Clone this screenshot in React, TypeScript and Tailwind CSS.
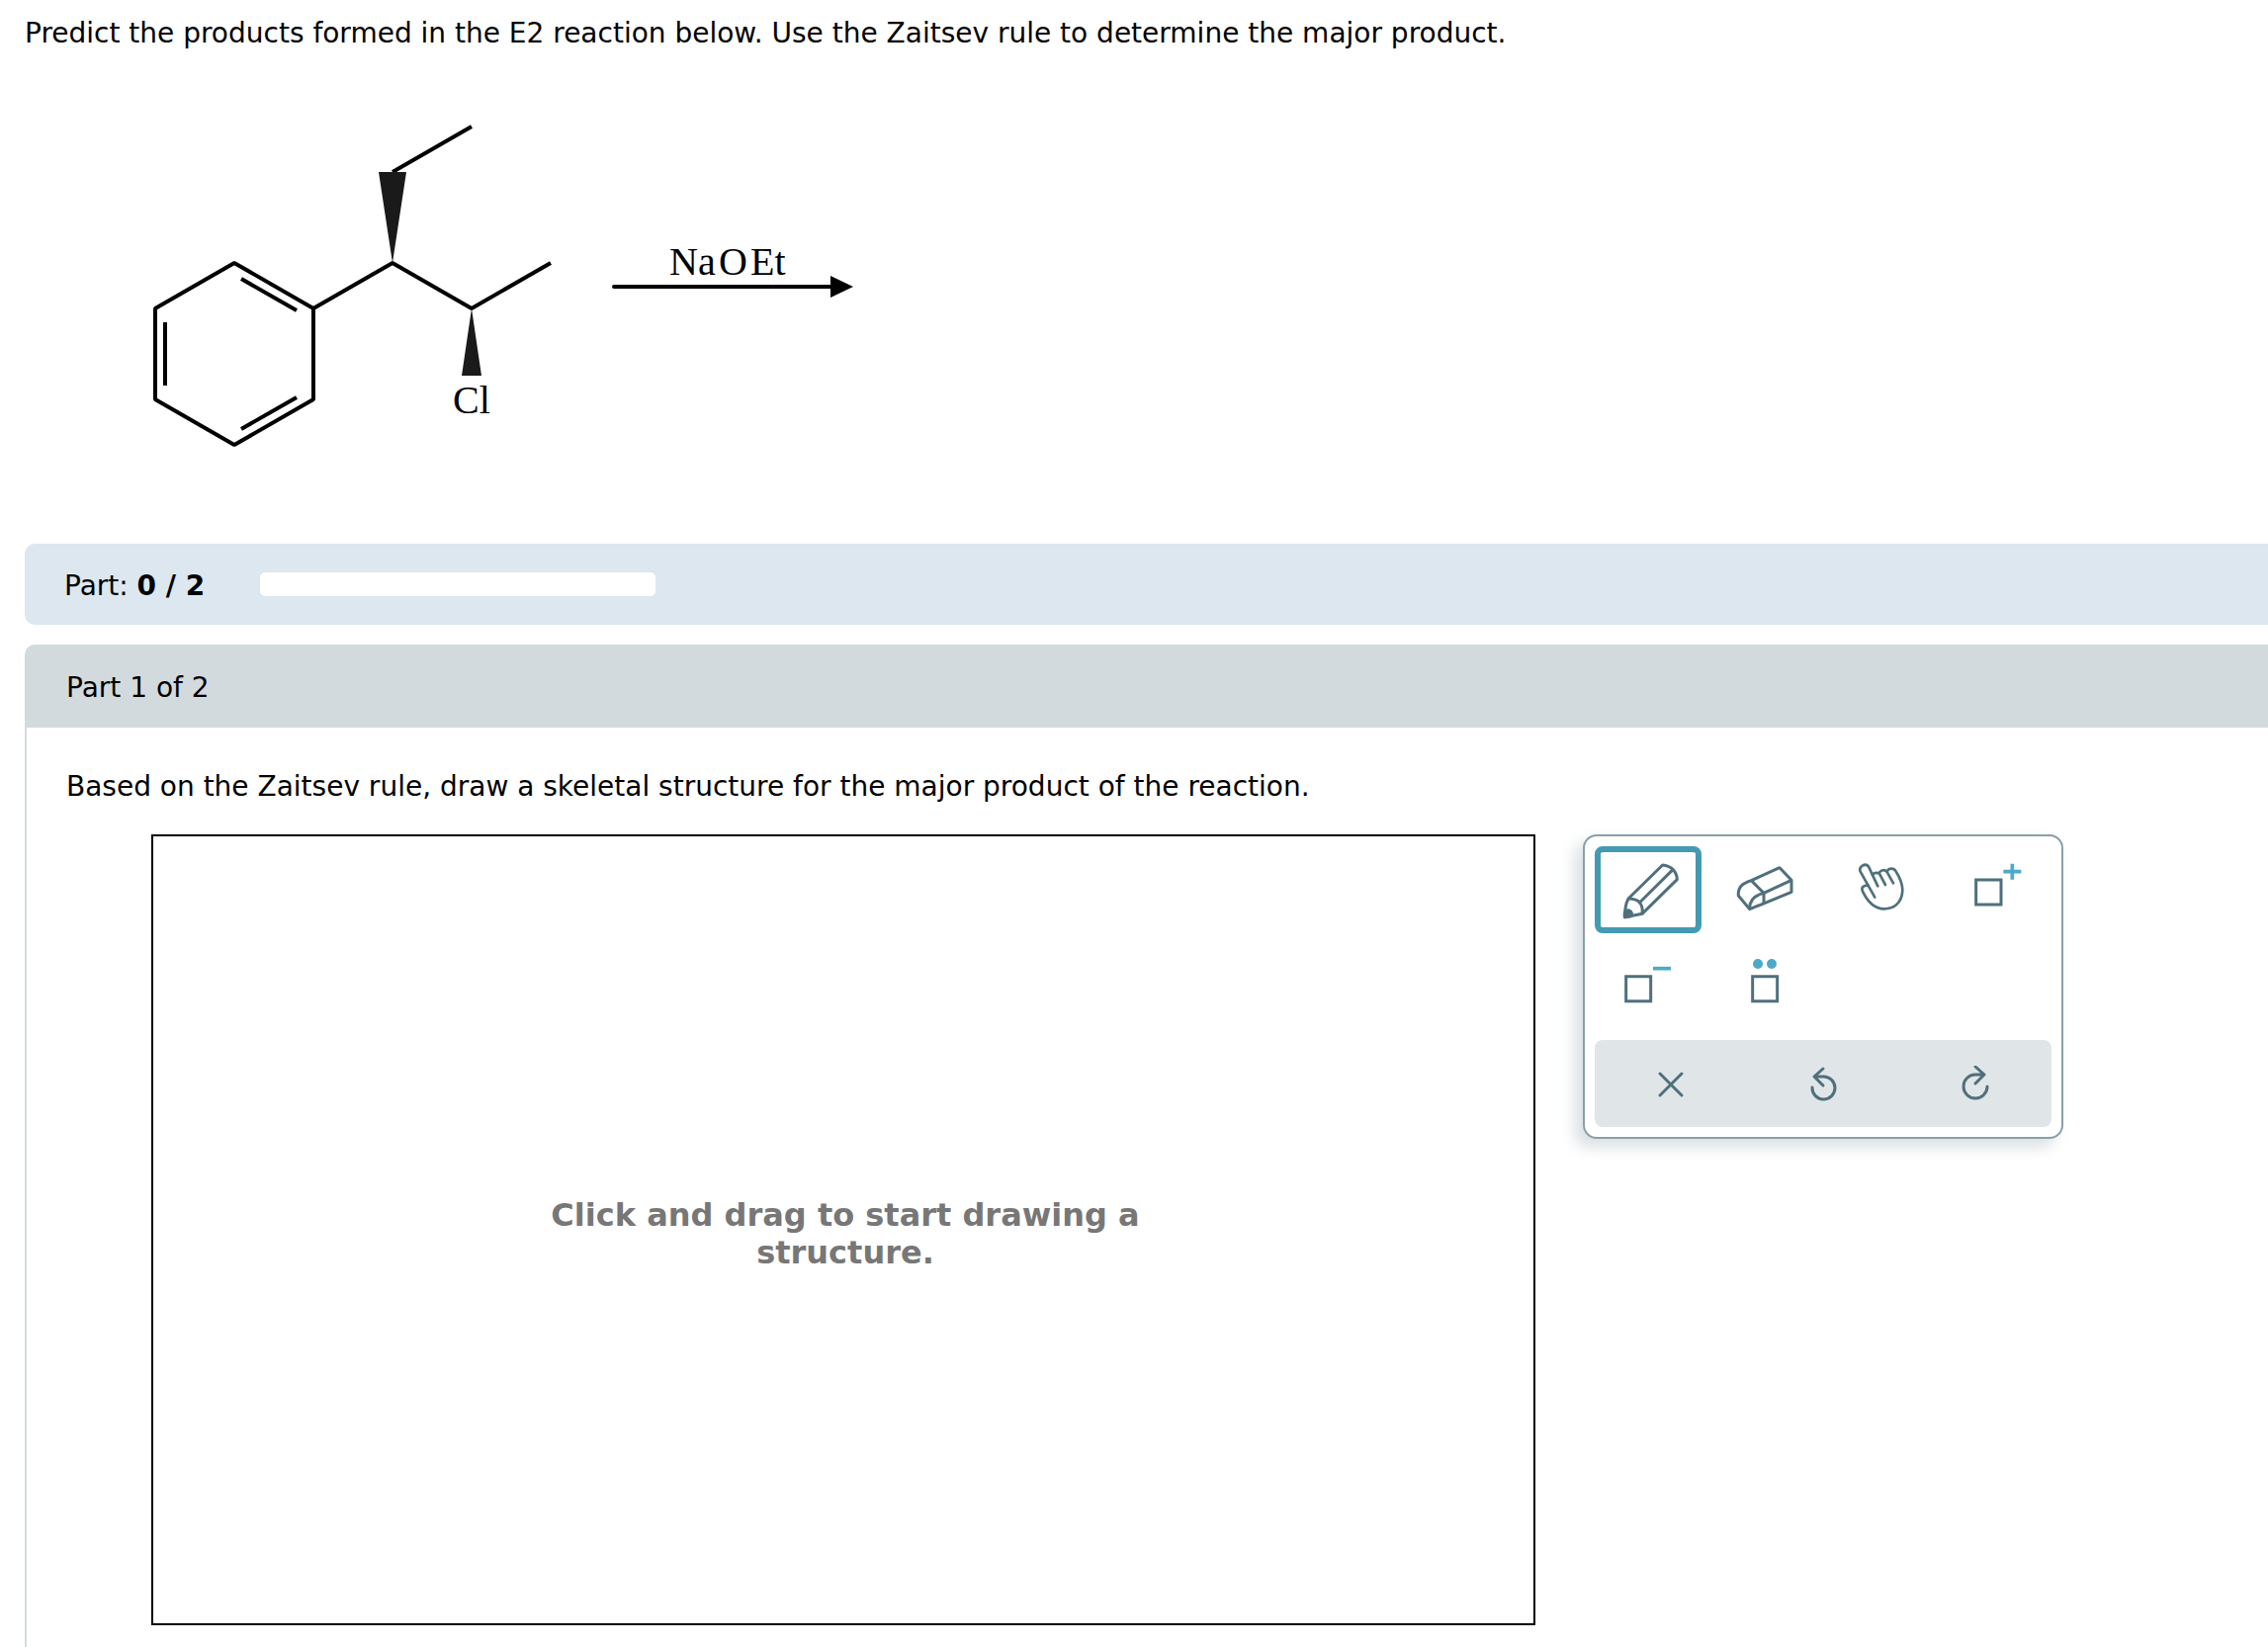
import type { ReactNode } from "react";

const Molecule = () => {
  return (
    <svg
      viewBox="0 0 720 340"
      className="ml-[151px] h-[340px] w-[720px]"
      role="img"
      aria-label="Reaction scheme"
    >
      <g transform="translate(-151 -118)">
        <g fill="none" stroke="#000" strokeWidth="4" strokeLinecap="butt">
          {/* benzene ring */}
          <path d="M237 266 317 312V404L237 450 157 404V312Z" strokeLinejoin="bevel" />
          <path d="M244 282 300 314M167 326V390M300 402 244 434" />
          {/* chain */}
          <path d="M317 312 397 266 477 312 557 266M397 174 477 128" strokeLinejoin="bevel" />
          <path d="M621 290H842" strokeLinecap="round" />
        </g>
        <path d="M383 174H411L397 266ZM477 312 487 380H467Z" fill="#1a1a1a" />
        <path d="M840 279 863 290 840 301Z" />
        <g fontFamily="Liberation Serif, Times New Roman, serif" fontSize="40">
          <text x="458" y="418">Cl</text>
          <text x="677" y="278">Na</text>
          <text x="727" y="278">O</text>
          <text x="759" y="278">Et</text>
        </g>
      </g>
    </svg>
  );
};

const PencilIcon = () => (
  <svg viewBox="0 0 288 228" className="h-full w-full" fill="none" stroke="#4f707c" strokeWidth="9" strokeLinejoin="round">
    <path d="M84 141 188 39C211 41 231 56 232 83L126 187 74 197C72 182 76 156 84 141Z" />
    <path d="M84 141C105 142 114 146 118 153C128 163 128 173 126 187M118 153 217 55" />
    <path d="M73 197C70 180 78 174 87 177C96 181 96 190 92 194Z" fill="#4f707c" />
  </svg>
);

const EraserIcon = () => (
  <svg viewBox="0 0 288 228" className="h-full w-full" fill="none" stroke="#4f707c" strokeWidth="9" strokeLinejoin="round">
    <path d="M103 86 189 47 225 85V121L98 173 64 132C62 103 78 95 103 86Z" />
    <path d="M103 86 141 124V155M225 85 141 124C114 131 97 146 98 173" />
  </svg>
);

const HandIcon = () => (
  <svg viewBox="0 0 288 228" className="h-full w-full" fill="none" stroke="#4f707c" strokeWidth="8" strokeLinecap="round" strokeLinejoin="round">
    <path d="M124 137 80 59C74 44 95 31 105 44L133 103" />
    <path d="M117 69C121 62 133 60 139 67L156 99" />
    <path d="M137 63C143 52 156 52 162 62L180 94" />
    <path d="M161 58C167 47 182 48 187 57C200 77 208 96 208 116C206 158 178 172 152 172C127 172 105 157 87 119C81 106 90 101 103 101" />
  </svg>
);

const PlusChargeIcon = () => (
  <svg viewBox="0 0 288 228" className="h-full w-full" fill="none" strokeWidth="9">
    <path d="M77 84H153V159H77Z" stroke="#4f707c" />
    <path d="M160 59H214M187 35V83" stroke="#4daac7" strokeWidth="11" />
  </svg>
);

const MinusChargeIcon = () => (
  <svg viewBox="0 0 288 228" className="h-full w-full" fill="none" strokeWidth="9">
    <path d="M77 83H152V158H77Z" stroke="#4f707c" />
    <path d="M159 59H213" stroke="#4daac7" strokeWidth="11" />
  </svg>
);

const LonePairIcon = () => (
  <svg viewBox="0 0 288 228" className="h-full w-full" fill="none" strokeWidth="9">
    <path d="M107 83H182V158H107Z" stroke="#4f707c" />
    <circle cx="123" cy="45" r="15" fill="#4daac7" />
    <circle cx="165" cy="45" r="15" fill="#4daac7" />
  </svg>
);

const ToolButton = ({
  label,
  active = false,
  children,
}: {
  label: string;
  active?: boolean;
  children: ReactNode;
}) => (
  <button
    type="button"
    aria-label={label}
    aria-pressed={active}
    className={`h-[88px] rounded-lg border-6 ${active ? "border-[#4499b3]" : "border-transparent"}`}
  >
    {children}
  </button>
);

const Toolbar = () => {
  return (
    <div className="grid w-[486px] shrink-0 grid-cols-4 gap-[10px] rounded-[14px] border-2 border-[#8aa0a9] bg-white p-[10px] shadow-[-8px_8px_16px_#d8dfe2]">
      <ToolButton label="Draw" active>
        <PencilIcon />
      </ToolButton>
      <ToolButton label="Erase">
        <EraserIcon />
      </ToolButton>
      <ToolButton label="Move">
        <HandIcon />
      </ToolButton>
      <ToolButton label="Positive charge">
        <PlusChargeIcon />
      </ToolButton>
      <ToolButton label="Negative charge">
        <MinusChargeIcon />
      </ToolButton>
      <ToolButton label="Lone pair">
        <LonePairIcon />
      </ToolButton>

      {/* Actions */}
      <div className="col-span-4 grid h-[88px] grid-cols-3 rounded-lg bg-[#e0e6e8]">
        <button type="button" aria-label="Clear" className="flex items-center justify-center">
          <svg viewBox="0 0 36 36" className="size-9" fill="none" stroke="#4f707c" strokeWidth="3" strokeLinecap="round">
            <path d="M7 8 29 30M29 8 7 30" />
          </svg>
        </button>
        <button type="button" aria-label="Undo" className="flex items-center justify-center">
          <svg viewBox="0 0 36 36" className="size-9" fill="none" stroke="#4f707c" strokeWidth="3" strokeLinecap="round" strokeLinejoin="round">
            <path d="M7 22A11.500 11.500 0 1 0 18 11H9M18 3 9 11 18 20" />
          </svg>
        </button>
        <button type="button" aria-label="Redo" className="flex items-center justify-center">
          <svg viewBox="0 0 36 36" className="size-9" fill="none" stroke="#4f707c" strokeWidth="3" strokeLinecap="round" strokeLinejoin="round">
            <path d="M30 21A12 12 0 1 1 18 9H27M18 1 27 9 18 18" />
          </svg>
        </button>
      </div>
    </div>
  );
};

const App = () => {
  return (
    <main className="min-h-screen bg-white pl-[25px] font-['DejaVu_Sans',Verdana,sans-serif] text-[28px] leading-9 text-black">
      <p className="pt-4">
        Predict the products formed in the E2 reaction below. Use the Zaitsev
        rule to determine the major product.
      </p>

      <div className="-ml-[25px] pt-[66px] pb-[92px]">
        <Molecule />
      </div>

      {/* Progress */}
      <div className="flex h-[82px] items-center gap-14 rounded-l-[10px] bg-[#dde7ef] pl-10">
        <p id="progress-label" className="pt-1">
          Part: <b>0 / 2</b>
        </p>
        <div
          role="progressbar"
          aria-labelledby="progress-label"
          aria-valuenow={0}
          aria-valuemax={2}
          className="h-6 w-[400px] rounded-[5px] bg-white"
        />
      </div>

      {/* Part 1 */}
      <section className="mt-5">
        <h2 className="flex h-[84px] items-center rounded-tl-[10px] bg-[#d3dadd] pt-1 pl-[42px]">
          Part 1 of 2
        </h2>
        <div className="border-l-2 border-[#d3dadd] pt-[42px] pl-10">
          <p>
            Based on the Zaitsev rule, draw a skeletal structure for the major
            product of the reaction.
          </p>
          <div className="mt-[30px] ml-[86px] flex items-start gap-12 pb-[22px]">
            <div className="flex h-[800px] w-[1400px] items-center justify-center border-2 border-black pt-2 pl-1">
              <p className="w-[640px] text-center text-[32px] leading-[38px] font-bold text-[#777]">
                Click and drag to start drawing a structure.
              </p>
            </div>
            <Toolbar />
          </div>
        </div>
      </section>
    </main>
  );
};

export default App;
